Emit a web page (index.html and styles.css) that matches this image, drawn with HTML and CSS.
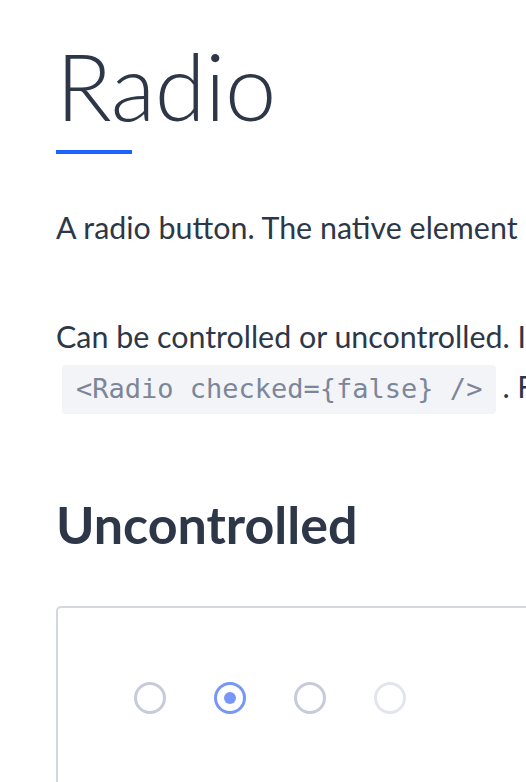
FILE: index.html
```html
<!DOCTYPE html>
<html lang="en">
<head>
<meta charset="utf-8">
<title>Radio</title>
<link rel="stylesheet" href="styles.css">
</head>
<body>
<main class="page">
  <h1 class="title">Radio</h1>
  <div class="title-bar"></div>
  <p class="lead">A radio button. The native element is visually hidden but remains accessible.</p>
  <p class="lead second">Can be controlled or uncontrolled. In controlled mode, pass the checked prop:<br><code class="code">&lt;Radio checked={false} /&gt;</code>. For uncontrolled mode use defaultChecked.</p>
  <h2 class="section">Uncontrolled</h2>
  <div class="demo">
    <div class="radios">
      <input class="radio" type="radio" name="r1">
      <input class="radio" type="radio" name="r1" checked>
      <input class="radio" type="radio" name="r1">
      <input class="radio" type="radio" name="r1" disabled>
    </div>
  </div>
</main>
</body>
</html>
```
FILE: styles.css
```css
html, body {
  margin: 0;
  padding: 0;
  overflow: hidden;
  background: #ffffff;
}
body {
  font-family: Lato, "Liberation Sans", sans-serif;
  color: #2d3748;
}
.page {
  width: 1400px;
  padding: 40px 0 0 56px;
}
.title {
  margin: 0;
  font-size: 92px;
  font-weight: 300;
  line-height: 1;
  letter-spacing: -0.5px;
}
.title-bar {
  width: 76px;
  height: 4px;
  margin-top: 18px;
  background: #1d64ff;
}
.lead {
  margin: 48px 0 0;
  font-size: 30.4px;
  line-height: 50px;
  white-space: nowrap;
}
.lead.second {
  margin-top: 59px;
}
.code {
  font-family: "DejaVu Sans Mono", "Liberation Mono", monospace;
  font-size: 27px;
  color: #7d8699;
  background: #f3f4f8;
  border-radius: 4px;
  padding: 8px 14px 10px;
  margin: 0 6px;
}
.section {
  margin: 84px 0 0;
  font-size: 52px;
  font-weight: 700;
  line-height: 1;
}
.demo {
  margin-top: 56px;
  border: 2px solid #d3d7e2;
  border-radius: 5px;
  height: 400px;
  padding: 74px 0 0 76px;
}
.radios {
  display: flex;
  gap: 48px;
}
.radio {
  appearance: none;
  -webkit-appearance: none;
  margin: 0;
  width: 32px;
  height: 32px;
  box-sizing: border-box;
  border: 3px solid #c6cbdc;
  border-radius: 50%;
  background: #ffffff;
  display: grid;
  place-items: center;
}
.radio:checked {
  border-color: #7895f8;
}
.radio:checked::after {
  content: "";
  width: 12px;
  height: 12px;
  border-radius: 50%;
  background: #7895f8;
}
.radio:disabled {
  border-color: #e2e5ee;
}
```
